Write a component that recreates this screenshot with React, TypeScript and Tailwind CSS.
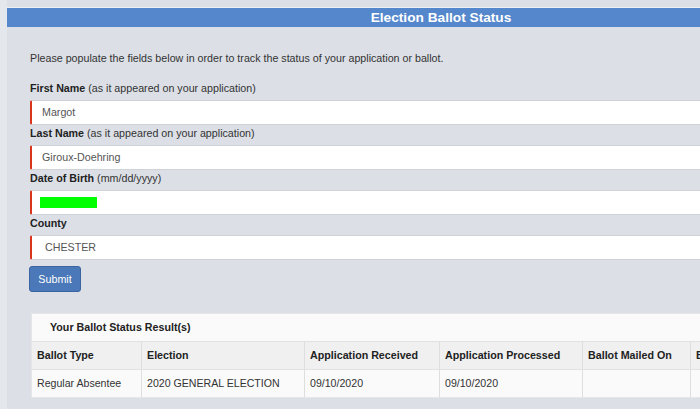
import React from "react";

const fields = [
  { label: "First Name", hint: "(as it appeared on your application)", value: "Margot" },
  { label: "Last Name", hint: "(as it appeared on your application)", value: "Giroux-Doehring" },
  { label: "Date of Birth", hint: "(mm/dd/yyyy)", value: "" },
];

const columns = [
  { title: "Ballot Type", value: "Regular Absentee", w: "w-[109px]" },
  { title: "Election", value: "2020 GENERAL ELECTION", w: "w-[163px]" },
  { title: "Application Received", value: "09/10/2020", w: "w-[135px]" },
  { title: "Application Processed", value: "09/10/2020", w: "w-[143px]" },
  { title: "Ballot Mailed On", value: "", w: "w-[108px]" },
  { title: "Ballot Received", value: "", w: "w-[140px]" },
];

const App: React.FC = () => {
  return (
    <div
      className="w-[700px] h-[409px] overflow-hidden bg-[#e4e7eb] text-[#333]"
      style={{ fontFamily: '"Liberation Sans", Arial, sans-serif' }}
    >
      <div className="w-[868px] ml-[7px] h-full bg-[#dce0e6] border-t-[7px] border-[#dce0e6]">
        <div className="h-[20px] bg-[#5487cc] border-t border-[#eef0f3] flex items-center justify-center">
          <span className="text-white font-bold text-[13.7px] leading-none">Election Ballot Status</span>
        </div>

        <div className="px-[23px]">
          <p className="text-[10.7px] leading-[16px] mt-[23px] mb-[14px]">
            Please populate the fields below in order to track the status of your application or ballot.
          </p>

          {fields.map((f) => (
            <div key={f.label}>
              <div className="text-[10.7px] leading-[16px] mb-[4px]">
                <span className="font-bold text-[#222]">{f.label}</span> <span>{f.hint}</span>
              </div>
              <div className="h-[25px] bg-white border border-[#cfd2d6] border-l-2 border-l-[#d9341c] rounded-l-[2px] flex items-center pl-[10px] text-[10.7px] text-[#555]">
                {f.value ? f.value : <span className="block -ml-[2px] w-[57px] h-[11px] bg-[#00ff00]" />}
              </div>
            </div>
          ))}

          <div>
            <div className="text-[10.7px] leading-[16px] mb-[4px] font-bold text-[#222]">County</div>
            <div className="h-[25px] bg-white border border-[#cfd2d6] border-l-2 border-l-[#d9341c] rounded-l-[2px] flex items-center pl-[13px] text-[10.7px] text-[#555]">
              CHESTER
            </div>
          </div>

          <button className="mt-[6px] -ml-[1px] h-[26px] w-[52px] rounded-[3px] bg-[#4a78b8] border border-[#3a649f] text-white text-[10.7px]">
            Submit
          </button>

          <div className="mt-[21px] ml-[1px] bg-[#fafafa] border border-[#e6e6e6]">
            <div className="h-[27px] flex items-center pl-[18px] text-[10.7px] font-bold text-[#222]">
              Your Ballot Status Result(s)
            </div>
            <div className="flex h-[28px] bg-[#f0f0f0] border-t border-[#e2e2e2]">
              {columns.map((c, i) => (
                <div
                  key={c.title}
                  className={`${c.w} shrink-0 flex items-center pl-[5px] text-[10.7px] font-bold text-[#222] ${i > 0 ? "border-l border-[#dedede]" : ""}`}
                >
                  {c.title}
                </div>
              ))}
            </div>
            <div className="flex h-[28px] bg-[#fafafa] border-t border-[#e2e2e2]">
              {columns.map((c, i) => (
                <div
                  key={c.title}
                  className={`${c.w} shrink-0 flex items-center pl-[5px] text-[10.6px] text-[#333] ${i > 0 ? "border-l border-[#dedede]" : ""}`}
                >
                  {c.value}
                </div>
              ))}
            </div>
          </div>
        </div>
      </div>
    </div>
  );
};

export default App;
